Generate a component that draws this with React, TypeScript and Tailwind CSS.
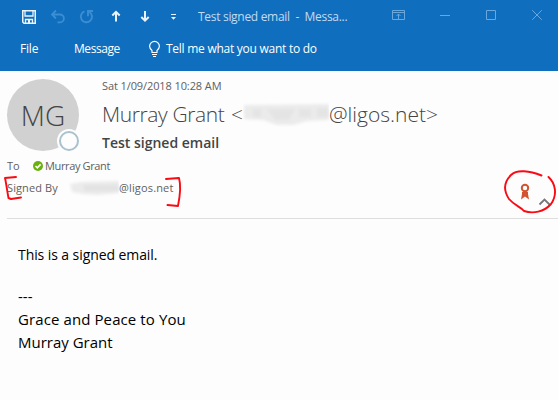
import React from 'react';

function TitleBar() {
  return (
    <div className="flex h-[33px] items-center text-[#eaf3fb]">
      <svg className="shrink-0" width="190" height="33" viewBox="0 0 190 33" fill="none">
        <path d="M22.75 10.75H35.25V23.25H24L22.75 22Z" stroke="currentColor" strokeWidth="1.5" />
        <path d="M25 11V16H33V11M25.5 23V19.5H32.5V23" stroke="currentColor" strokeWidth="1.3" />
        <path d="M28 20H30V23H28Z" fill="currentColor" />
        <path d="M56 10.5L52 14.5L56 18.5M52.5 14.5H60A3.9 3.9 0 0 1 60 22.3H57.5" stroke="#3c8ed2" strokeWidth="1.8" />
        <path d="M84.500 11.4A5.600 5.600 0 1 0 89.500 12M93 11H88V16.2" stroke="#3c8ed2" strokeWidth="1.9" />
        <path d="M116 21.5V12M112.3 15.5L116 11.8L119.7 15.5" stroke="currentColor" strokeWidth="2" />
        <path d="M145 11V20.5M141.3 17L145 20.7L148.7 17" stroke="currentColor" strokeWidth="2" />
        <path d="M171 14.5H176" stroke="currentColor" />
        <path d="M171 17H176L173.5 19.7Z" fill="currentColor" />
      </svg>
      <div className="w-[202px] shrink-0 pl-2 text-[12px] leading-4 tracking-[-0.3px] whitespace-pre text-[#c2dbf1]">Test signed email  -  Messa...</div>
      <svg className="shrink-0" width="166" height="33" viewBox="392 0 166 33" fill="none" stroke="#69a7dc">
        <path d="M392.5 10.5H404.5V19.5H392.5ZM392.5 12.5H404.5M398.5 19V14M396.5 16L398.5 14L400.5 16" />
        <path d="M440 15.5H450M486.5 10.5H495.5V19.5H486.5ZM532.2 10.2L541.8 19.8M541.8 10.2L532.2 19.8" />
      </svg>
    </div>
  );
}

function RibbonTabs() {
  return (
    <div className="flex h-[32px] items-center text-[12px] leading-4 font-medium text-white">
      <span className="w-[54px] pl-5 tracking-[-0.2px]">File</span>
      <span className="ml-5 w-[74px] tracking-[-0.45px]">Message</span>
      <svg className="shrink-0" width="18" height="20" viewBox="148 38 18 20" fill="none" stroke="currentColor" strokeWidth="1.2">
        <path d="M152 51.5V49.5C150.6 48.3 149.6 47 149.6 45.3A4.9 4.9 0 0 1 159.4 45.3C159.4 47 158.4 48.3 157 49.5V51.5ZM152 53.5H157M153 55.5H156" />
      </svg>
      <span className="tracking-[-0.26px] whitespace-nowrap">Tell me what you want to do</span>
    </div>
  );
}

function Avatar() {
  return (
    <div className="relative mt-2 flex h-[72px] w-[72px] shrink-0 items-center justify-center rounded-full bg-[#d1d1d1] text-[28px] leading-none font-light text-[#444]">
      MG
      <span className="absolute right-[-2px] bottom-[-2px] h-[24px] w-[24px] rounded-full bg-[#fdfdfd] p-[2px]">
        <span className="block h-[20px] w-[20px] rounded-full border-2 border-[#a9c2ce] bg-[#fdfdfd]" />
      </span>
    </div>
  );
}

function MessageHeader() {
  return (
    <header className="relative h-[148px] px-[7px] text-[#606060]">
      <div className="flex">
        <Avatar />
        <div className="ml-[23px] whitespace-nowrap">
          <div className="mt-[7px] text-[11px] leading-4 tracking-[-0.1px]">Sat 1/09/2018 10:28 AM</div>
          <div className="mt-1 flex h-[32px] items-center text-[21px] leading-8 font-light text-[#444]">
            <span className="w-[129px] tracking-[-0.38px]">Murray Grant</span>
            <span className="w-[12px]">&lt;</span>
            <svg width="86" height="28" viewBox="0 0 86 28">
              <defs>
                <filter id="soft" x="-10%" y="-30%" width="120%" height="160%">
                  <feGaussianBlur stdDeviation="1.6" />
                </filter>
              </defs>
              <g filter="url(#soft)">
                <path d="M1 5L86 4V20L64 21L50 25H34L20 20L1 19Z" fill="#ebebeb" />
                <path d="M10 9H18V17H10ZM24 9H52L46 20H32ZM56 9H68V17H56ZM74 8H86V17H74Z" fill="#e4e4e4" />
              </g>
            </svg>
            <span>@ligos.net&gt;</span>
          </div>
          <div className="mt-[3px] text-[14px] leading-5 font-semibold text-[#444]">Test signed email</div>
        </div>
      </div>
      <div className="mt-[5px] flex h-4 items-center text-[11px] leading-4">
        <span className="w-[26px]">To</span>
        <svg className="mr-[2px]" width="10" height="10" viewBox="0 0 10 10" fill="none">
          <circle cx="5" cy="5" r="5" fill="#6bb00f" />
          <path d="M2.5 5L4.3 6.8L7.6 3.4" stroke="white" strokeWidth="1.6" />
        </svg>
        <span className="tracking-[-0.36px]">Murray Grant</span>
      </div>
      <div className="mt-[6px] flex h-4 items-center text-[11px] leading-4">
        <span className="w-[62px] tracking-[0.1px]">Signed By</span>
        <svg width="50" height="18" viewBox="0 0 50 18">
          <g filter="url(#soft)">
            <path d="M1 5L12 3L50 2V14L28 16L14 15L3 13Z" fill="#ebebeb" />
            <path d="M14 6H50V12H16Z" fill="#e2e2e2" />
          </g>
        </svg>
        <span className="tracking-[0.15px]">@ligos.net</span>
      </div>
      <div className="absolute right-0 bottom-0 left-[7px] h-px bg-[#dedede]" />
      <svg className="absolute inset-0" width="558" height="148" viewBox="0 71 558 148" fill="none">
        <circle cx="525" cy="188" r="3.2" stroke="#d35230" strokeWidth="2" />
        <path d="M522 192H528V194L529 199.500L525 196.500L521 199.500L522 194Z" fill="#d35230" />
        <path d="M539.5 204.5L544.5 199.5L549.5 204.5" stroke="#777" strokeWidth="1.8" />
        <g stroke="#fa0a12" strokeWidth="1.9" strokeLinecap="round" strokeLinejoin="round">
          <path d="M16 177L5 178C6 182 7 190 8.500 198L11 199L21 197.500M166 179L179 178C181 185 180 196 178 206L167.500 205" />
          <path d="M541.500 175.500C530 171 517 169 511 175C504 182 503 190 509 199C515 206 521 207 524 211C533 214 544 212 551 204C558 194 555 183 548.500 177" />
        </g>
      </svg>
    </header>
  );
}

export default function App() {
  return (
    <div className="h-[400px] w-[558px] overflow-hidden bg-[#fdfdfd] font-['Open_Sans','Noto_Sans',sans-serif]">
      <div className="h-[71px] bg-[#106ebe]">
        <TitleBar />
        <RibbonTabs />
      </div>
      <MessageHeader />
      <main className="pt-[24px] pl-[18px] text-[15px] leading-[23px] whitespace-pre text-black">
        <p className="text-[14px] tracking-[-0.08px]">This is a signed email.</p>
        <p className="pt-[19px]">---</p>
        <p className="tracking-[0.1px]">Grace and Peace to You</p>
        <p>Murray Grant</p>
      </main>
    </div>
  );
}
